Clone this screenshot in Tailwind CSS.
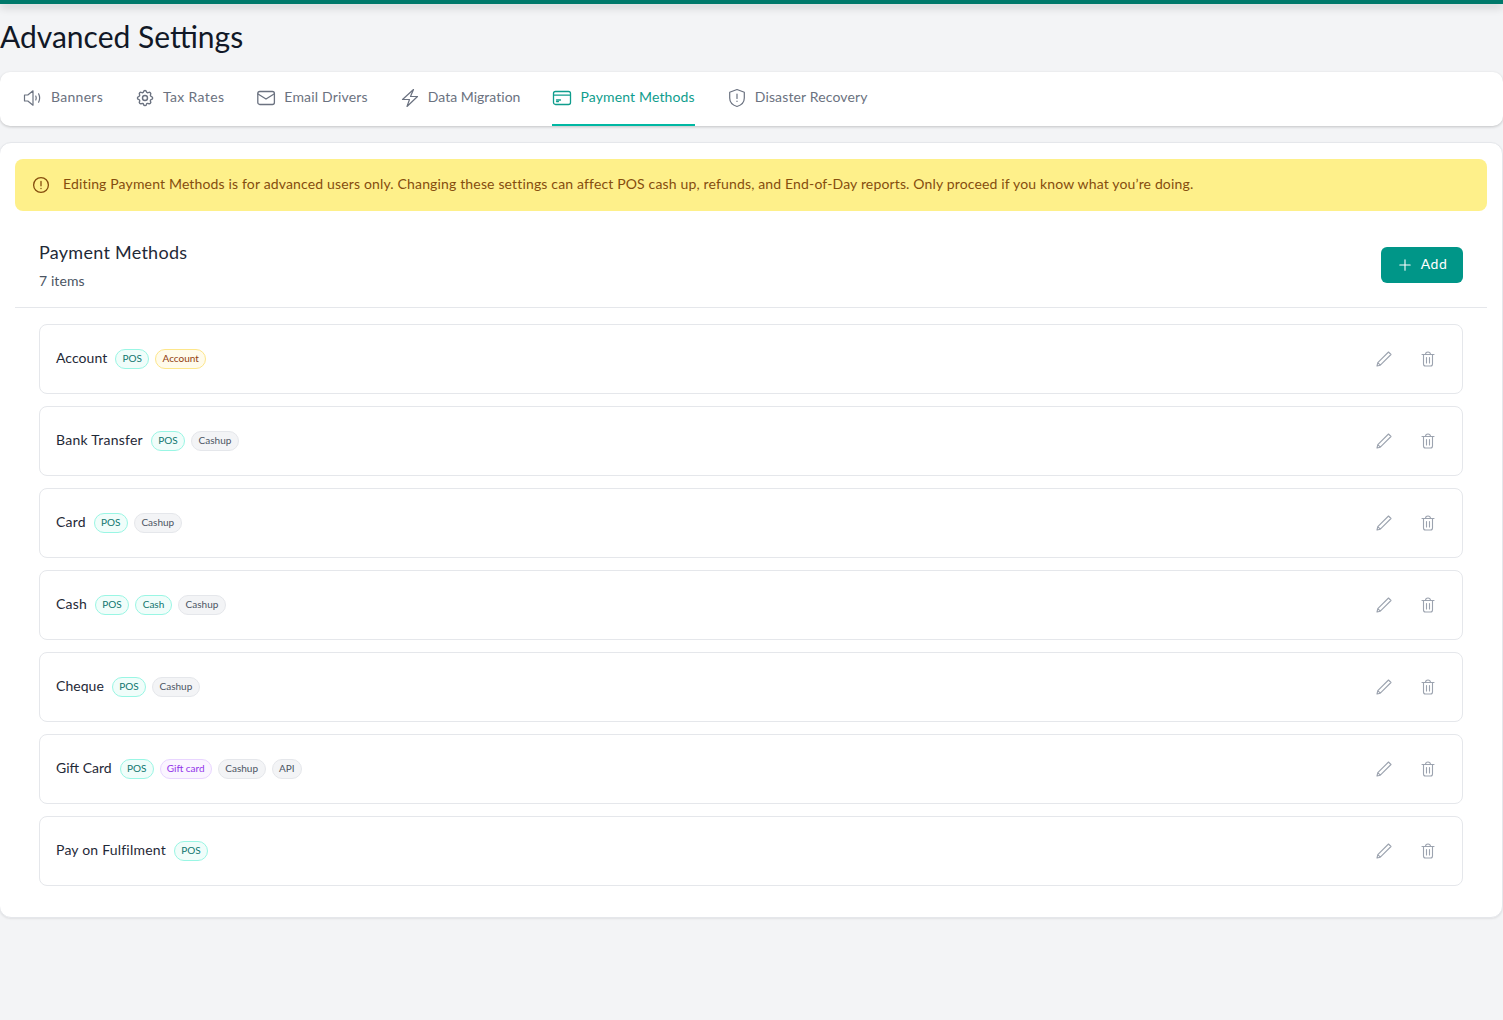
<!DOCTYPE html>
<html>
<head>
<meta charset="utf-8">
<script src="https://cdn.jsdelivr.net/npm/@tailwindcss/browser@4"></script>
</head>
<body class="bg-[#f3f4f6] font-['Lato','Noto_Sans',sans-serif] min-h-[1020px]">
<div class="h-1 bg-[#00796b] shadow-[0_3px_9px_rgba(0,0,0,0.22)]"></div>
<h1 class="h-[68px] pt-[13px] text-[30px] leading-[38px] text-[#111827]">Advanced Settings</h1>
<nav class="h-[54px] bg-white rounded-[10px] shadow-[0_1px_3px_rgba(0,0,0,0.2)] flex items-stretch gap-8 px-[23px] text-sm text-[#6b7280]">
  <a class="flex items-center gap-2 border-b-2 border-transparent">
    <svg class="w-5 h-5" viewBox="0 0 20 20" fill="none" stroke="currentColor" stroke-width="1.200" stroke-linecap="round" stroke-linejoin="round"><path d="M1.500 7h3.300L10 2.800v14.400L4.800 13H1.500z"/><path d="M12.800 8c.6 1.300.6 2.700 0 4M15.600 5.800c1.400 2.800 1.400 5.600 0 8.400"/></svg>
    <span class="pb-0.5 tracking-[0.28px]">Banners</span></a>
  <a class="flex items-center gap-2 border-b-2 border-transparent">
    <svg class="w-5 h-5" viewBox="0 0 24 24" fill="none" stroke="currentColor" stroke-width="1.700" stroke-linecap="round" stroke-linejoin="round"><path d="M10.300 4.300c.4-1.800 3-1.800 3.400 0a1.700 1.700 0 0 0 2.600 1.100c1.500-.9 3.300.8 2.400 2.400a1.700 1.700 0 0 0 1.100 2.500c1.800.4 1.800 3 0 3.400a1.700 1.700 0 0 0-1.100 2.600c.9 1.500-.8 3.300-2.400 2.400a1.700 1.700 0 0 0-2.600 1.100c-.4 1.800-3 1.800-3.400 0a1.700 1.700 0 0 0-2.500-1.100c-1.600.9-3.300-.9-2.400-2.400a1.700 1.700 0 0 0-1.100-2.600c-1.800-.4-1.800-3 0-3.400a1.700 1.700 0 0 0 1.100-2.500c-.9-1.600.8-3.300 2.400-2.400a1.700 1.700 0 0 0 2.500-1.100z"/><circle cx="12" cy="12" r="3"/></svg>
    <span class="pb-0.5 tracking-[0.35px]">Tax Rates</span></a>
  <a class="flex items-center gap-2 border-b-2 border-transparent">
    <svg class="w-5 h-5" viewBox="0 0 20 20" fill="none" stroke="currentColor" stroke-width="1.300" stroke-linecap="round" stroke-linejoin="round"><rect x="1.800" y="3.500" width="16.600" height="13" rx="2"/><path d="M2 6l8 5 8-5"/></svg>
    <span class="pb-0.5 tracking-[0.18px]">Email Drivers</span></a>
  <a class="flex items-center gap-2 border-b-2 border-transparent">
    <svg class="w-5 h-5" viewBox="0 0 20 20" fill="none" stroke="currentColor" stroke-width="1.200" stroke-linecap="round" stroke-linejoin="round"><path d="M13.500 1.500L2.500 11.500h7L7 18.500l10.500-10h-7z"/></svg>
    <span class="pb-0.5 tracking-[0.02px]">Data Migration</span></a>
  <a class="flex items-center gap-2 text-[#0f9d8d] border-b-2 border-[#00b8a3]">
    <svg class="w-5 h-5" viewBox="0 0 20 20" fill="none" stroke="currentColor" stroke-width="1.300" stroke-linecap="round" stroke-linejoin="round"><rect x="1.500" y="3.500" width="17" height="13" rx="2"/><path d="M1.800 7.200h16.400M4.500 12h4M4.500 13.600h2"/></svg>
    <span class="pb-0.5 tracking-[0.14px]">Payment Methods</span></a>
  <a class="flex items-center gap-2 border-b-2 border-transparent">
    <svg class="w-5 h-5" viewBox="0 0 20 20" fill="none" stroke="currentColor" stroke-width="1.200" stroke-linecap="round" stroke-linejoin="round"><path d="M10 1.500l7.300 2.700v5.800c0 4.200-3.100 7.200-7.300 8.500-4.200-1.300-7.300-4.300-7.300-8.500V4.200z"/><path d="M10 6v4.500M10 13.200v.3"/></svg>
    <span class="pb-0.5 tracking-[0.14px]">Disaster Recovery</span></a>
</nav>
<main class="mt-4 -ml-px h-[776px] bg-white rounded-xl border border-[#e5e7eb] shadow-[0_1px_2px_rgba(0,0,0,0.08)] pt-4 pl-[15px] pr-[15px]">
  <div class="h-[52px] bg-[#fef08a] rounded-lg flex items-center gap-[13px] px-[17px] text-sm tracking-[0.155px] text-[#854d0e]">
    <svg class="w-[18px] h-[18px] shrink-0" viewBox="0 0 18 18" fill="none" stroke="currentColor" stroke-width="1.300" stroke-linecap="round"><circle cx="9" cy="9" r="7.400"/><path d="M9 5.500v4.300M9 12.300v.3"/></svg>
    <span class="pb-0.5">Editing Payment Methods is for advanced users only. Changing these settings can affect POS cash up, refunds, and End-of-Day reports. Only proceed if you know what you’re doing.</span>
  </div>
  <header class="h-[97px] pt-3 border-b border-[#e5e7eb] px-6 flex items-center justify-between">
    <div>
      <h2 class="text-lg leading-[26px] tracking-[0.27px] text-[#1f2937]">Payment Methods</h2>
      <p class="mt-1.5 text-sm leading-5 tracking-[0.1px] text-[#4b5563]">7 items</p>
    </div>
    <button class="w-[82px] h-9 pl-0.5 rounded-md bg-[#009688] text-white text-sm tracking-[0.5px] flex items-center justify-center gap-[10px]">
      <svg class="w-[12px] h-[12px]" viewBox="0 0 12 12" fill="none" stroke="currentColor" stroke-width="1.100" stroke-linecap="round"><path d="M6 .8v10.400M.8 6h10.400"/></svg>
      <span class="pb-0.5">Add</span></button>
  </header>
  <ul class="mt-4 mx-6 flex flex-col gap-3">
    <li class="h-[70px] border border-[#e5e7eb] rounded-lg pl-4 pr-[26px] flex items-center gap-1.5">
      <span class="mr-0.5 pb-0.5 text-sm tracking-[0.05px] text-[#1f2937]">Account</span>
      <span class="h-5 w-[34px] text-center rounded-full border border-[#99f6e4] bg-[#f0fdfa] text-[10px] leading-[16px] text-[#0f766e]">POS</span>
      <span class="h-5 w-[51px] text-center rounded-full border border-[#fde68a] bg-[#fffbeb] text-[10px] leading-[16px] text-[#92400e]">Account</span>
      <span class="ml-auto flex items-center gap-7 text-[#9ca3af]">
        <svg class="w-4 h-4" viewBox="0 0 16 16" fill="none" stroke="currentColor" stroke-width="1.100" stroke-linejoin="round"><path d="M1 15l.8-3.300L12.500 1l2.500 2.500L4.300 14.200zM1.800 11.700l2.500 2.500"/></svg>
        <svg class="w-4 h-4" viewBox="0 0 16 16" fill="none" stroke="currentColor" stroke-width="1.100" stroke-linecap="round" stroke-linejoin="round"><path d="M2 3.500h12M5.500 3.500a2.500 2.500 0 0 1 5 0M3.500 3.500v9.500a2 2 0 0 0 2 2h5a2 2 0 0 0 2-2V3.500M6.500 6.500v5.500M9.500 6.500v5.500"/></svg>
      </span>
    </li>
    <li class="h-[70px] border border-[#e5e7eb] rounded-lg pl-4 pr-[26px] flex items-center gap-1.5">
      <span class="mr-0.5 pb-0.5 text-sm tracking-[0.25px] text-[#1f2937]">Bank Transfer</span>
      <span class="h-5 w-[34px] text-center rounded-full border border-[#99f6e4] bg-[#f0fdfa] text-[10px] leading-[16px] text-[#0f766e]">POS</span>
      <span class="h-5 w-[48px] text-center rounded-full border border-[#e5e7eb] bg-[#f3f4f6] text-[10px] leading-[16px] text-[#4b5563]">Cashup</span>
      <span class="ml-auto flex items-center gap-7 text-[#9ca3af]">
        <svg class="w-4 h-4" viewBox="0 0 16 16" fill="none" stroke="currentColor" stroke-width="1.100" stroke-linejoin="round"><path d="M1 15l.8-3.300L12.500 1l2.500 2.500L4.300 14.200zM1.800 11.700l2.500 2.500"/></svg>
        <svg class="w-4 h-4" viewBox="0 0 16 16" fill="none" stroke="currentColor" stroke-width="1.100" stroke-linecap="round" stroke-linejoin="round"><path d="M2 3.500h12M5.500 3.500a2.500 2.500 0 0 1 5 0M3.500 3.500v9.500a2 2 0 0 0 2 2h5a2 2 0 0 0 2-2V3.500M6.500 6.500v5.500M9.500 6.500v5.500"/></svg>
      </span>
    </li>
    <li class="h-[70px] border border-[#e5e7eb] rounded-lg pl-4 pr-[26px] flex items-center gap-1.5">
      <span class="mr-0.5 pb-0.5 text-sm tracking-[0.2px] text-[#1f2937]">Card</span>
      <span class="h-5 w-[34px] text-center rounded-full border border-[#99f6e4] bg-[#f0fdfa] text-[10px] leading-[16px] text-[#0f766e]">POS</span>
      <span class="h-5 w-[48px] text-center rounded-full border border-[#e5e7eb] bg-[#f3f4f6] text-[10px] leading-[16px] text-[#4b5563]">Cashup</span>
      <span class="ml-auto flex items-center gap-7 text-[#9ca3af]">
        <svg class="w-4 h-4" viewBox="0 0 16 16" fill="none" stroke="currentColor" stroke-width="1.100" stroke-linejoin="round"><path d="M1 15l.8-3.300L12.500 1l2.500 2.500L4.300 14.200zM1.800 11.700l2.500 2.500"/></svg>
        <svg class="w-4 h-4" viewBox="0 0 16 16" fill="none" stroke="currentColor" stroke-width="1.100" stroke-linecap="round" stroke-linejoin="round"><path d="M2 3.500h12M5.500 3.500a2.500 2.500 0 0 1 5 0M3.500 3.500v9.500a2 2 0 0 0 2 2h5a2 2 0 0 0 2-2V3.500M6.500 6.500v5.500M9.500 6.500v5.500"/></svg>
      </span>
    </li>
    <li class="h-[70px] border border-[#e5e7eb] rounded-lg pl-4 pr-[26px] flex items-center gap-1.5">
      <span class="mr-0.5 pb-0.5 text-sm tracking-[0.2px] text-[#1f2937]">Cash</span>
      <span class="h-5 w-[34px] text-center rounded-full border border-[#99f6e4] bg-[#f0fdfa] text-[10px] leading-[16px] text-[#0f766e]">POS</span>
      <span class="h-5 w-[37px] text-center rounded-full border border-[#99f6e4] bg-[#f0fdfa] text-[10px] leading-[16px] text-[#0f766e]">Cash</span>
      <span class="h-5 w-[48px] text-center rounded-full border border-[#e5e7eb] bg-[#f3f4f6] text-[10px] leading-[16px] text-[#4b5563]">Cashup</span>
      <span class="ml-auto flex items-center gap-7 text-[#9ca3af]">
        <svg class="w-4 h-4" viewBox="0 0 16 16" fill="none" stroke="currentColor" stroke-width="1.100" stroke-linejoin="round"><path d="M1 15l.8-3.300L12.500 1l2.500 2.500L4.300 14.200zM1.800 11.700l2.500 2.500"/></svg>
        <svg class="w-4 h-4" viewBox="0 0 16 16" fill="none" stroke="currentColor" stroke-width="1.100" stroke-linecap="round" stroke-linejoin="round"><path d="M2 3.500h12M5.500 3.500a2.500 2.500 0 0 1 5 0M3.500 3.500v9.500a2 2 0 0 0 2 2h5a2 2 0 0 0 2-2V3.500M6.500 6.500v5.500M9.500 6.500v5.500"/></svg>
      </span>
    </li>
    <li class="h-[70px] border border-[#e5e7eb] rounded-lg pl-4 pr-[26px] flex items-center gap-1.5">
      <span class="mr-0.5 pb-0.5 text-sm tracking-[0.05px] text-[#1f2937]">Cheque</span>
      <span class="h-5 w-[34px] text-center rounded-full border border-[#99f6e4] bg-[#f0fdfa] text-[10px] leading-[16px] text-[#0f766e]">POS</span>
      <span class="h-5 w-[48px] text-center rounded-full border border-[#e5e7eb] bg-[#f3f4f6] text-[10px] leading-[16px] text-[#4b5563]">Cashup</span>
      <span class="ml-auto flex items-center gap-7 text-[#9ca3af]">
        <svg class="w-4 h-4" viewBox="0 0 16 16" fill="none" stroke="currentColor" stroke-width="1.100" stroke-linejoin="round"><path d="M1 15l.8-3.300L12.500 1l2.500 2.500L4.300 14.200zM1.800 11.700l2.500 2.500"/></svg>
        <svg class="w-4 h-4" viewBox="0 0 16 16" fill="none" stroke="currentColor" stroke-width="1.100" stroke-linecap="round" stroke-linejoin="round"><path d="M2 3.500h12M5.500 3.500a2.500 2.500 0 0 1 5 0M3.500 3.500v9.500a2 2 0 0 0 2 2h5a2 2 0 0 0 2-2V3.500M6.500 6.500v5.500M9.500 6.500v5.500"/></svg>
      </span>
    </li>
    <li class="h-[70px] border border-[#e5e7eb] rounded-lg pl-4 pr-[26px] flex items-center gap-1.5">
      <span class="mr-0.5 pb-0.5 text-sm text-[#1f2937]">Gift Card</span>
      <span class="h-5 w-[34px] text-center rounded-full border border-[#99f6e4] bg-[#f0fdfa] text-[10px] leading-[16px] text-[#0f766e]">POS</span>
      <span class="h-5 w-[52px] text-center rounded-full border border-[#e9d5ff] bg-[#faf5ff] text-[10px] leading-[16px] text-[#9333ea]">Gift card</span>
      <span class="h-5 w-[48px] text-center rounded-full border border-[#e5e7eb] bg-[#f3f4f6] text-[10px] leading-[16px] text-[#4b5563]">Cashup</span>
      <span class="h-5 w-[30px] text-center rounded-full border border-[#e5e7eb] bg-[#f3f4f6] text-[10px] leading-[16px] text-[#4b5563]">API</span>
      <span class="ml-auto flex items-center gap-7 text-[#9ca3af]">
        <svg class="w-4 h-4" viewBox="0 0 16 16" fill="none" stroke="currentColor" stroke-width="1.100" stroke-linejoin="round"><path d="M1 15l.8-3.300L12.500 1l2.500 2.500L4.300 14.200zM1.800 11.700l2.500 2.500"/></svg>
        <svg class="w-4 h-4" viewBox="0 0 16 16" fill="none" stroke="currentColor" stroke-width="1.100" stroke-linecap="round" stroke-linejoin="round"><path d="M2 3.500h12M5.500 3.500a2.500 2.500 0 0 1 5 0M3.500 3.500v9.500a2 2 0 0 0 2 2h5a2 2 0 0 0 2-2V3.500M6.500 6.500v5.500M9.500 6.500v5.500"/></svg>
      </span>
    </li>
    <li class="h-[70px] border border-[#e5e7eb] rounded-lg pl-4 pr-[26px] flex items-center gap-1.5">
      <span class="mr-0.5 pb-0.5 text-sm tracking-[0.2px] text-[#1f2937]">Pay on Fulfilment</span>
      <span class="h-5 w-[34px] text-center rounded-full border border-[#99f6e4] bg-[#f0fdfa] text-[10px] leading-[16px] text-[#0f766e]">POS</span>
      <span class="ml-auto flex items-center gap-7 text-[#9ca3af]">
        <svg class="w-4 h-4" viewBox="0 0 16 16" fill="none" stroke="currentColor" stroke-width="1.100" stroke-linejoin="round"><path d="M1 15l.8-3.300L12.500 1l2.500 2.500L4.300 14.200zM1.800 11.700l2.500 2.500"/></svg>
        <svg class="w-4 h-4" viewBox="0 0 16 16" fill="none" stroke="currentColor" stroke-width="1.100" stroke-linecap="round" stroke-linejoin="round"><path d="M2 3.500h12M5.500 3.500a2.500 2.500 0 0 1 5 0M3.500 3.500v9.500a2 2 0 0 0 2 2h5a2 2 0 0 0 2-2V3.500M6.500 6.500v5.500M9.500 6.500v5.500"/></svg>
      </span>
    </li>
  </ul>
</main>
</body>
</html>
